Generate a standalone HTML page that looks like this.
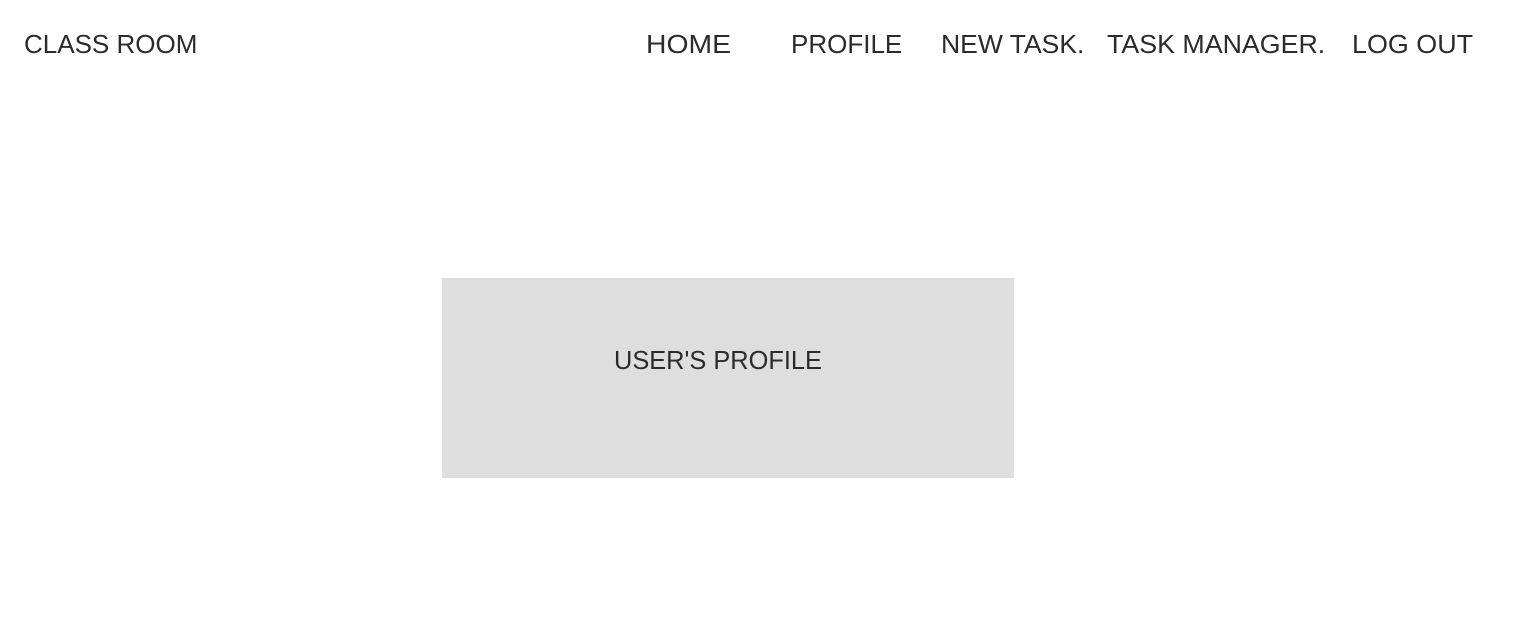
<!DOCTYPE html>
<html><head><meta charset="utf-8"><style>
body{margin:0;width:1536px;height:640px;background:#fff;position:relative;font-family:"Liberation Sans",sans-serif;color:#2b2b2b;overflow:hidden}
.t{position:absolute;top:27px;font-size:26px;line-height:34px;white-space:nowrap;transform-origin:0 0}
.box{position:absolute;left:442px;top:278px;width:572px;height:200px;background:#dedede}
.bt{position:absolute;left:614px;top:343px;font-size:26px;line-height:34px;white-space:nowrap;transform-origin:0 0;transform:scaleX(0.976)}
</style></head><body>
<div class="t" style="left:24px">CLASS ROOM</div>
<div class="t" style="left:646px;transform:scaleX(1.09)">HOME</div>
<div class="t" style="left:791px">PROFILE</div>
<div class="t" style="left:941px;transform:scaleX(1.02)">NEW TASK.</div>
<div class="t" style="left:1107px;transform:scaleX(1.03)">TASK MANAGER.</div>
<div class="t" style="left:1352px;transform:scaleX(1.035)">LOG OUT</div>
<div class="box"></div>
<div class="bt">USER'S PROFILE</div>
</body></html>
